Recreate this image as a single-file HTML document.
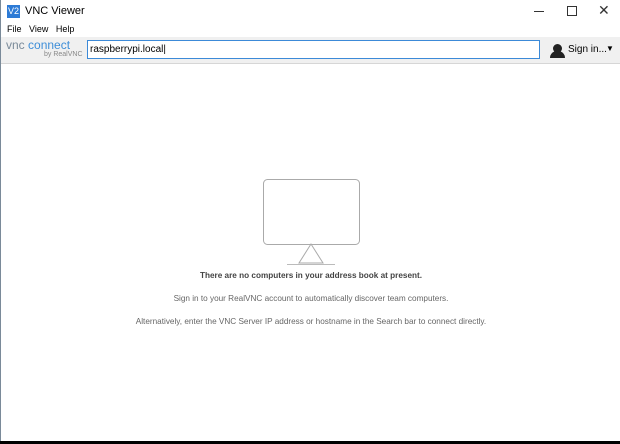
<html><head><style>
body{margin:0;width:620px;height:444px;overflow:hidden;background:#000;font-family:"Liberation Sans",sans-serif;position:relative}
.win{position:absolute;left:0;top:0;width:620px;height:441px;background:#fff;border-left:1px solid #7a8a99;box-sizing:border-box}
.t{position:absolute;font-size:12px;color:#000}
.c{position:absolute;left:0;width:620px;text-align:center;font-size:8.2px;color:#666}
</style></head><body>
<div class="win">
<div style="position:absolute;left:6px;top:5px;width:13px;height:13px;background:#2d7bd6;color:#fff;font-size:9px;line-height:13px;text-align:center">V2</div>
<div class="t" style="left:24px;top:5px;font-size:11px">VNC Viewer</div>
<div style="position:absolute;left:533px;top:11px;width:10px;height:1px;background:#333"></div>
<div style="position:absolute;left:566px;top:6px;width:8px;height:8px;border:1px solid #333"></div>
<div class="t" style="left:597px;top:2px;font-size:14px;color:#333">✕</div>
<div class="t" style="left:6px;top:24px;font-size:9px">File&nbsp;&nbsp; View&nbsp;&nbsp; Help</div>
<div style="position:absolute;left:0;top:37px;width:620px;height:26px;background:#f0f0f0;border-bottom:1px solid #d6d6d6"></div>
<div style="position:absolute;left:5px;top:38px;font-size:12px;color:#7a8a99;letter-spacing:0"><span>vnc</span> <span style="color:#3e8ed8">connect</span></div>
<div style="position:absolute;left:43px;top:51px;font-size:7px;color:#888">by RealVNC</div>
<div style="position:absolute;left:86px;top:40px;width:453px;height:19px;background:#fff;border:1px solid #3c8ad8;box-sizing:border-box;font-size:10px;line-height:17px;padding-left:2px">raspberrypi.local|</div>
<div style="position:absolute;left:552px;top:44px;width:9px;height:9px;border-radius:50%;background:#222"></div>
<div style="position:absolute;left:549px;top:51px;width:15px;height:7px;border-radius:7px 7px 0 0;background:#222"></div>
<div class="t" style="left:567px;top:44px;font-size:10px">Sign in...</div>
<div class="t" style="left:605px;top:44px;font-size:8px">▼</div>
<svg style="position:absolute;left:0;top:0" width="620" height="441">
<rect x="262.5" y="179.5" width="96" height="65" rx="4" fill="none" stroke="#aaa"/>
<path d="M310 244 L298 263 L322 263 Z" fill="none" stroke="#aaa"/>
<line x1="286" y1="264.5" x2="334" y2="264.5" stroke="#bbb"/>
</svg>
<div class="c" style="top:271px;font-weight:bold;color:#444">There are no computers in your address book at present.</div>
<div class="c" style="top:294px">Sign in to your RealVNC account to automatically discover team computers.</div>
<div class="c" style="top:317px">Alternatively, enter the VNC Server IP address or hostname in the Search bar to connect directly.</div>
</div>
</body></html>
